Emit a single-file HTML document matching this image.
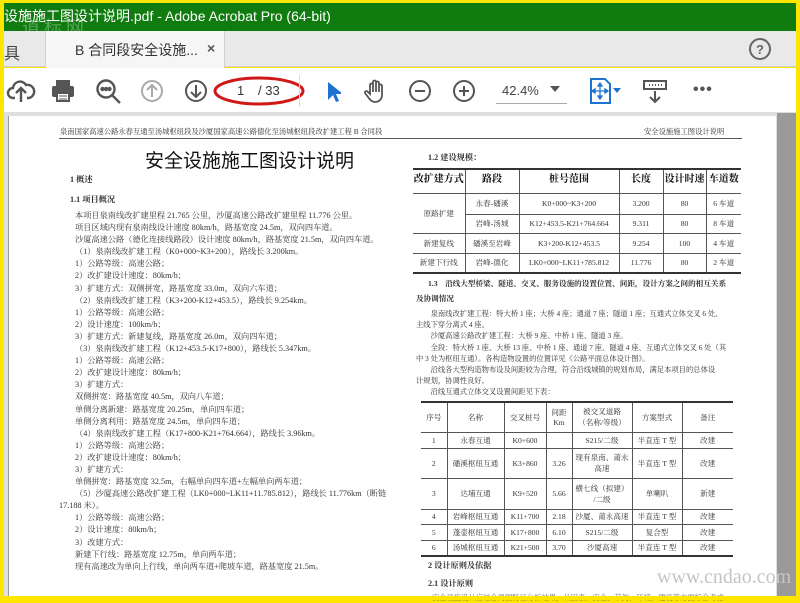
<!DOCTYPE html>
<html><head><meta charset="utf-8">
<style>
*{margin:0;padding:0;box-sizing:border-box}
body{width:800px;height:600px;overflow:hidden;background:#ffe600;position:relative;font-family:"Liberation Sans","Noto Sans CJK SC",sans-serif}
.a{position:absolute;white-space:nowrap}
.s{font-family:"Liberation Serif","Noto Serif CJK SC",serif;color:#333}
.t9{font-size:8.2px;line-height:11px}
table{border-collapse:collapse;position:absolute;font-family:"Liberation Serif","Noto Serif CJK SC",serif;color:#333;font-size:7.6px;text-align:center}
td{border:1px solid #555;padding:0;vertical-align:middle}
</style></head><body>
<!-- title bar -->
<div class="a" style="left:4px;top:3px;width:792px;height:28px;background:#107c10"></div>
<div class="a" style="left:4px;top:7px;color:#fff;font-size:14px;line-height:18px">设施施工图设计说明.pdf - Adobe Acrobat Pro (64-bit)</div>
<div class="a" style="left:22px;top:14px;color:rgba(255,255,255,.3);font-size:18px;letter-spacing:4px">道标网</div>
<!-- tab bar -->
<div class="a" style="left:4px;top:31px;width:792px;height:36px;background:#e9e9e9;border-bottom:1px solid #cfcfcf"></div>
<div class="a" style="left:4px;top:40px;font-size:16px;color:#444">具</div>
<div class="a" style="left:45px;top:31px;width:180px;height:37px;background:#f6f6f6;border-left:1px solid #d0d0d0;border-right:1px solid #d0d0d0"></div>
<div class="a" style="left:75px;top:40px;font-size:14px;color:#333">B 合同段安全设施...</div>
<div class="a" style="left:207px;top:40px;font-size:14px;color:#555;font-weight:bold">×</div>
<svg class="a" style="left:748px;top:37px" width="24" height="24"><circle cx="12" cy="12" r="10" fill="none" stroke="#666" stroke-width="2"/><text x="12" y="17" text-anchor="middle" font-size="13" font-weight="bold" fill="#666" font-family="Liberation Sans">?</text></svg>
<!-- toolbar -->
<div class="a" style="left:4px;top:68px;width:792px;height:45px;background:#fff;border-bottom:1px solid #ddd"></div>
<svg class="a" style="left:6px;top:76px" width="30" height="30" fill="none" stroke="#555" stroke-width="2.4"><path d="M9 22H7a5 5 0 0 1 0-10 7 7 0 0 1 13-3 6 6 0 0 1 3 13h-2"/><path d="M15 26V13M10 17l5-5 5 5"/></svg>
<svg class="a" style="left:50px;top:78px" width="26" height="26"><rect x="6" y="2" width="14" height="6" fill="#555"/><rect x="2" y="8" width="22" height="11" rx="2" fill="#555"/><rect x="7" y="15" width="12" height="8" fill="#fff" stroke="#555" stroke-width="2"/><path d="M9 18h8M9 21h8" stroke="#555"/></svg>
<svg class="a" style="left:95px;top:78px" width="28" height="28" fill="none" stroke="#555" stroke-width="2.4"><circle cx="11" cy="11" r="8.5"/><path d="M17 17l8 8"/><circle cx="7.5" cy="11" r="1" fill="#555"/><circle cx="11" cy="11" r="1" fill="#555"/><circle cx="14.5" cy="11" r="1" fill="#555"/></svg>
<svg class="a" style="left:140px;top:79px" width="24" height="24" fill="none" stroke="#aaa" stroke-width="2"><circle cx="12" cy="12" r="10"/><path d="M12 18V6M7 11l5-5 5 5"/></svg>
<svg class="a" style="left:184px;top:79px" width="24" height="24" fill="none" stroke="#555" stroke-width="2"><circle cx="12" cy="12" r="10"/><path d="M12 6v12M7 13l5 5 5-5"/></svg>
<svg class="a" style="left:212px;top:74px" width="96" height="34"><ellipse cx="47" cy="17" rx="44" ry="13" fill="none" stroke="#d01818" stroke-width="3"/></svg>
<div class="a" style="left:237px;top:83px;font-size:13px;color:#333">1</div>
<div class="a" style="left:258px;top:83px;font-size:13px;color:#333">/ 33</div>
<div class="a" style="left:299px;top:75px;width:1px;height:32px;background:#ddd"></div>
<svg class="a" style="left:325px;top:80px" width="16" height="24"><path d="M3 2v18l5-5 3 7 3-1-3-7h7z" fill="#1e73d2"/></svg>
<svg class="a" style="left:363px;top:78px" width="26" height="26" fill="none" stroke="#555" stroke-width="1.8"><path d="M7 16V7a1.5 1.5 0 0 1 3 0v7V4a1.5 1.5 0 0 1 3 0v10V5a1.5 1.5 0 0 1 3 0v9V8a1.5 1.5 0 0 1 3 0v9c0 4-3 7-7 7-3 0-5-2-7-5l-3-4a1.5 1.5 0 0 1 2.5-1.5z"/></svg>
<svg class="a" style="left:408px;top:79px" width="24" height="24" fill="none" stroke="#555" stroke-width="2"><circle cx="12" cy="12" r="10"/><path d="M7 12h10"/></svg>
<svg class="a" style="left:452px;top:79px" width="24" height="24" fill="none" stroke="#555" stroke-width="2"><circle cx="12" cy="12" r="10"/><path d="M7 12h10M12 7v10"/></svg>
<div class="a" style="left:502px;top:83px;font-size:13px;color:#444">42.4%</div>
<div class="a" style="left:496px;top:103px;width:71px;height:1px;background:#aaa"></div>
<svg class="a" style="left:550px;top:86px" width="10" height="6"><path d="M0 0h10L5 6z" fill="#555"/></svg>
<svg class="a" style="left:589px;top:78px" width="34" height="26"><path d="M2 1h14l5 5v19H2z" fill="#fff" stroke="#1e73d2" stroke-width="2"/><path d="M11 6v14M4 13h14M11 5l-2 3h4zM11 21l-2-3h4zM3 13l3-2v4zM19 13l-3-2v4z" stroke="#1e73d2" fill="#1e73d2" stroke-width="1.3"/><path d="M24 10h8l-4 5z" fill="#1e73d2"/></svg>
<svg class="a" style="left:643px;top:80px" width="26" height="24"><rect x="1" y="1" width="22" height="8" fill="none" stroke="#555" stroke-width="2"/><path d="M6 5h1M9 5h1M12 5h1M15 5h1M18 5h1" stroke="#555" stroke-width="2"/><path d="M12 11v11M7 17l5 5 5-5" fill="none" stroke="#555" stroke-width="2"/></svg>
<div class="a" style="left:693px;top:81px;font-size:16px;color:#555;letter-spacing:1px;font-weight:bold">•••</div>
<!-- document area -->
<div class="a" style="left:4px;top:113px;width:773px;height:483px;background:#e0e0e0"></div>
<div class="a" style="left:8px;top:116px;width:768px;height:480px;background:#fff;border-left:1px solid #999"></div>
<div class="a" style="left:777px;top:113px;width:19px;height:483px;background:#9a9a9a"></div>
<!-- page content left -->
<div class="a s" style="left:60px;top:127px;font-size:7.3px">泉南国家高速公路永春互通至汤城枢纽段及沙厦国家高速公路德化至汤城枢纽段改扩建工程 B 合同段</div>
<div class="a" style="left:59px;top:138px;width:683px;height:1px;background:#555"></div>
<div class="a s" style="left:644px;top:127px;font-size:7.3px">安全设施施工图设计说明</div>
<div class="a s" style="left:145px;top:146px;font-size:19px;color:#111;font-family:'Noto Sans CJK SC',sans-serif">安全设施施工图设计说明</div>
<div class="a s t9" style="left:70px;top:174px;font-weight:bold">1 概述</div>
<div class="a s t9" style="left:70px;top:194px;font-weight:bold">1.1 项目概况</div>
<div class="a s t9" style="left:75px;top:210px;line-height:12.1px">本项目泉南线改扩建里程 21.765 公里，沙厦高速公路改扩建里程 11.776 公里。<br>项目区域内现有泉南线设计速度 80km/h，路基宽度 24.5m，双向四车道。<br>沙厦高速公路（德化连接线路段）设计速度 80km/h，路基宽度 21.5m，双向四车道。<br>（1）泉南线改扩建工程（K0+000~K3+200），路线长 3.200km。<br>1）公路等级：高速公路；<br>2）改扩建设计速度：80km/h；<br>3）扩建方式：双侧拼宽，路基宽度 33.0m，双向六车道；<br>（2）泉南线改扩建工程（K3+200-K12+453.5），路线长 9.254km。<br>1）公路等级：高速公路；<br>2）设计速度：100km/h；<br>3）扩建方式：新建复线，路基宽度 26.0m，双向四车道；<br>（3）泉南线改扩建工程（K12+453.5-K17+800），路线长 5.347km。<br>1）公路等级：高速公路；<br>2）改扩建设计速度：80km/h；<br>3）扩建方式：<br>双侧拼宽：路基宽度 40.5m，双向八车道；<br>单侧分离新建：路基宽度 20.25m，单向四车道；<br>单侧分离利用：路基宽度 24.5m，单向四车道；<br>（4）泉南线改扩建工程（K17+800-K21+764.664），路线长 3.96km。<br>1）公路等级：高速公路；<br>2）改扩建设计速度：80km/h；<br>3）扩建方式：<br>单侧拼宽：路基宽度 32.5m，右幅单向四车道+左幅单向两车道；<br>（5）沙厦高速公路改扩建工程（LK0+000~LK11+11.785.812），路线长 11.776km（断链<br><span style="margin-left:-16px">17.188 米）。</span><br>1）公路等级：高速公路；<br>2）设计速度：80km/h；<br>3）改建方式：<br>新建下行线：路基宽度 12.75m，单向两车道；<br>现有高速改为单向上行线，单向两车道+爬坡车道，路基宽度 21.5m。</div>
<!-- right column -->
<div class="a s t9" style="left:428px;top:152px;font-weight:bold">1.2 建设规模：</div>
<table style="left:413px;top:168px;width:328px;border-top:2px solid #333;border-bottom:2px solid #333">
<tr style="height:24px;font-size:10px;font-weight:bold;color:#111"><td style="width:52px;border-left:0;vertical-align:top">改扩建方式</td><td style="width:54px;vertical-align:top">路段</td><td style="width:100px;vertical-align:top">桩号范围</td><td style="width:44px;vertical-align:top">长度</td><td style="width:43px;vertical-align:top">设计时速</td><td style="border-right:0;vertical-align:top">车道数</td></tr>
<tr style="height:21px"><td rowspan="2" style="border-left:0">原路扩建</td><td>永春-磻溪</td><td>K0+000~K3+200</td><td>3.200</td><td>80</td><td style="border-right:0">6 车道</td></tr>
<tr style="height:19px"><td>岩峰-汤城</td><td>K12+453.5-K21+764.664</td><td>9.311</td><td>80</td><td style="border-right:0">8 车道</td></tr>
<tr style="height:20px"><td style="border-left:0">新建复线</td><td>磻溪至岩峰</td><td>K3+200-K12+453.5</td><td>9.254</td><td>100</td><td style="border-right:0">4 车道</td></tr>
<tr style="height:20px"><td style="border-left:0">新建下行线</td><td>岩峰-德化</td><td>LK0+000~LK11+785.812</td><td>11.776</td><td>80</td><td style="border-right:0">2 车道</td></tr>
</table>
<div class="a s" style="left:428px;top:278px;font-weight:bold;font-size:7.6px;line-height:11px;word-spacing:2px">1.3　沿线大型桥梁、隧道、交叉、服务设施的设置位置、间距，设计方案之间的相互关系</div>
<div class="a s" style="left:416px;top:293px;font-weight:bold;font-size:7.6px;line-height:11px">及协调情况</div>
<div class="a s" style="left:416px;top:308px;line-height:11.2px;font-size:7.3px">　　泉南线改扩建工程：特大桥 1 座；大桥 4 座；通道 7 座；隧道 1 座；互通式立体交叉 6 处、<br>主线下穿分离式 4 座。<br>　　沙厦高速公路改扩建工程：大桥 9 座、中桥 1 座、隧道 3 座。<br>　　全段：特大桥 1 座、大桥 13 座、中桥 1 座、通道 7 座、隧道 4 座、互通式立体交叉 6 处（其<br>中 3 处为枢纽互通）。各构造物设置的位置详见《公路平面总体设计图》。<br>　　沿线各大型构造物布设及间距较为合理，符合沿线城镇的规划布局，满足本项目的总体设<br>计规划，协调性良好。<br>　　沿线互通式立体交叉设置间距见下表：</div>
<table style="left:421px;top:401px;width:312px;border-top:2px solid #333;border-bottom:2px solid #333">
<tr style="height:30px"><td style="width:26px;border-left:0">序号</td><td style="width:57px">名称</td><td style="width:42px">交叉桩号</td><td style="width:26px">间距<br>Km</td><td style="width:60px">被交叉道路<br>（名称/等级）</td><td style="width:50px">方案型式</td><td style="border-right:0">备注</td></tr>
<tr style="height:16px"><td style="border-left:0">1</td><td>永春互通</td><td>K0+600</td><td></td><td>S215/二级</td><td>半直连 T 型</td><td style="border-right:0">改建</td></tr>
<tr style="height:30px"><td style="border-left:0">2</td><td>磻溪枢纽互通</td><td>K3+860</td><td>3.26</td><td>现有泉南、莆永<br>高速</td><td>半直连 T 型</td><td style="border-right:0">改建</td></tr>
<tr style="height:31px"><td style="border-left:0">3</td><td>达埔互通</td><td>K9+520</td><td>5.66</td><td>横七线（拟建）<br>/二级</td><td>单喇叭</td><td style="border-right:0">新建</td></tr>
<tr style="height:15px"><td style="border-left:0">4</td><td>岩峰枢纽互通</td><td>K11+700</td><td>2.18</td><td>沙厦、莆永高速</td><td>半直连 T 型</td><td style="border-right:0">改建</td></tr>
<tr style="height:16px"><td style="border-left:0">5</td><td>蓬壶枢纽互通</td><td>K17+800</td><td>6.10</td><td>S215/二级</td><td>复合型</td><td style="border-right:0">改建</td></tr>
<tr style="height:16px"><td style="border-left:0">6</td><td>汤城枢纽互通</td><td>K21+500</td><td>3.70</td><td>沙厦高速</td><td>半直连 T 型</td><td style="border-right:0">改建</td></tr>
</table>
<div class="a s t9" style="left:428px;top:560px;font-weight:bold">2 设计原则及依据</div>
<div class="a s t9" style="left:428px;top:578px;font-weight:bold">2.1 设计原则</div>
<div class="a s" style="left:432px;top:593px;color:#666;font-size:7.3px">安全设施设计应结合周围特征分析结果，从因素、安全、节约、环境、建设等方面综合考虑</div>
<div class="a" style="left:657px;top:566px;font-family:'Liberation Serif',serif;font-size:20px;color:#c4c4c4">www.cndao.com</div>
<!-- borders -->
<div class="a" style="left:0;top:0;width:800px;height:3px;background:#ffe600"></div>
<div class="a" style="left:0;top:0;width:4px;height:600px;background:#ffe600"></div>
<div class="a" style="left:796px;top:0;width:4px;height:600px;background:#ffe600"></div>
<div class="a" style="left:0;top:596px;width:800px;height:4px;background:#ffe600"></div>
</body></html>
